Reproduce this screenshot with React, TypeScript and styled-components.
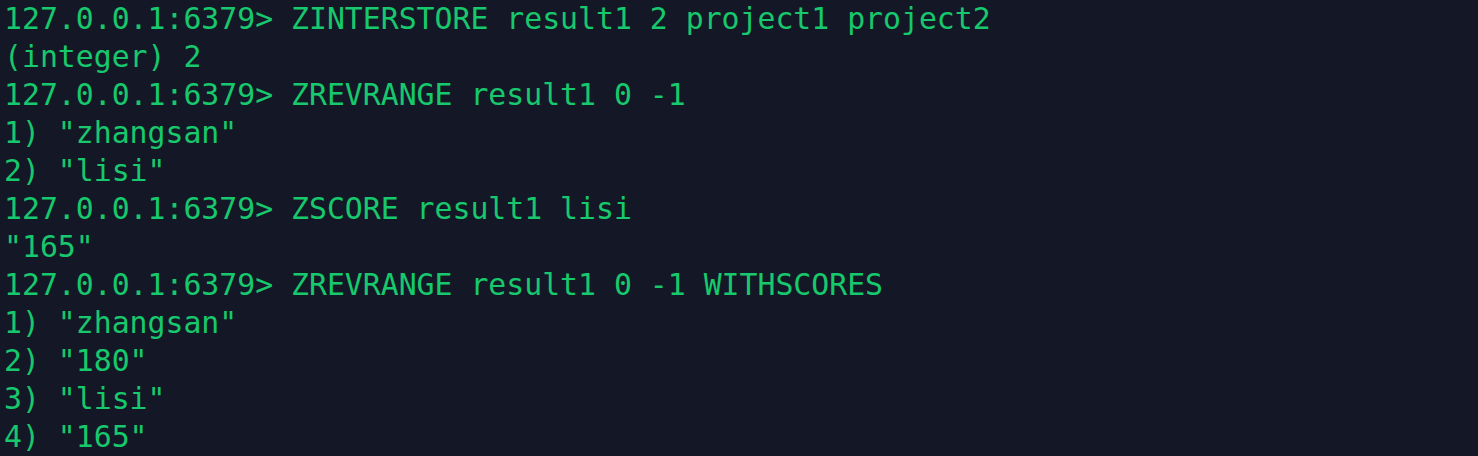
import React from "react";
import styled, { createGlobalStyle } from "styled-components";

const Global = createGlobalStyle`
  html, body { margin: 0; padding: 0; background: #141826; }
`;

const Terminal = styled.div`
  background: #141826;
  width: 1478px;
  height: 456px;
  box-sizing: border-box;
  padding: 0 0 0 4px;
  overflow: hidden;
  display: flex;
  flex-direction: column;
`;

const Line = styled.div`
  font-family: "DejaVu Sans Mono", "Liberation Mono", monospace;
  font-size: 29.8px;
  line-height: 38px;
  height: 38px;
  color: #17c86d;
  white-space: pre;
`;

const lines = [
  "127.0.0.1:6379> ZINTERSTORE result1 2 project1 project2",
  "(integer) 2",
  "127.0.0.1:6379> ZREVRANGE result1 0 -1",
  '1) "zhangsan"',
  '2) "lisi"',
  "127.0.0.1:6379> ZSCORE result1 lisi",
  '"165"',
  "127.0.0.1:6379> ZREVRANGE result1 0 -1 WITHSCORES",
  '1) "zhangsan"',
  '2) "180"',
  '3) "lisi"',
  '4) "165"',
];

export default function App() {
  return (
    <>
      <Global />
      <Terminal>
        {lines.map((l, i) => (
          <Line key={i}>{l}</Line>
        ))}
      </Terminal>
    </>
  );
}
